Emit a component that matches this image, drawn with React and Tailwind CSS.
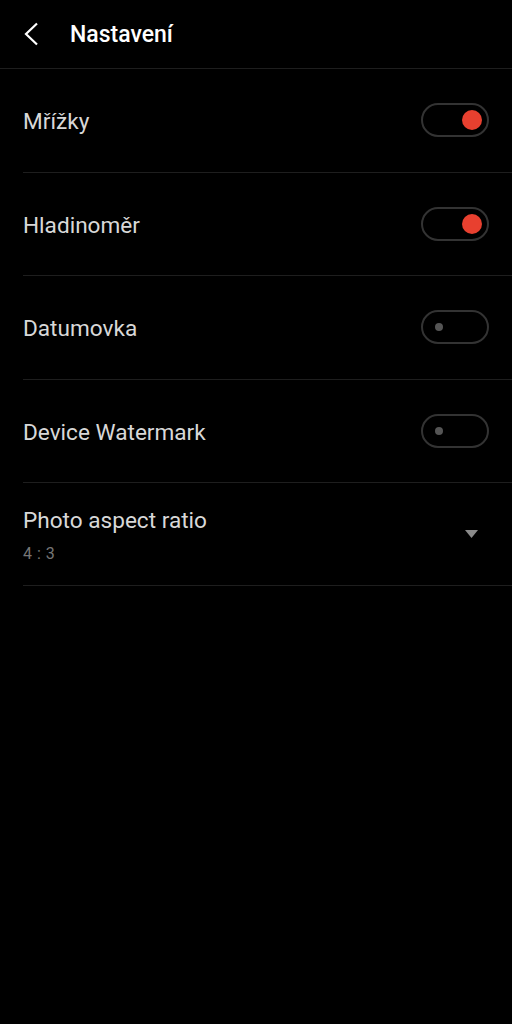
import React from "react";

function Toggle({ on }) {
  return (
    <div className="relative w-[68px] h-[34px] rounded-full border-2 border-[#333333] shrink-0">
      {on ? (
        <div className="absolute right-[5px] top-[5px] w-[20px] h-[20px] rounded-full bg-[#e8402f]" />
      ) : (
        <div className="absolute left-[12px] top-[11px] w-[8px] h-[8px] rounded-full bg-[#555555]" />
      )}
    </div>
  );
}

function Row({ label, on }) {
  return (
    <div className="h-[103.5px] border-b border-[#1e1e1e] flex items-center justify-between pr-[23px]">
      <span className="pt-[4px] text-[22.6px] text-[#d8d8d8]">{label}</span>
      <Toggle on={on} />
    </div>
  );
}

export default function App() {
  return (
    <div
      className="w-[512px] h-[1024px] bg-black overflow-hidden"
      style={{ fontFamily: "Roboto, 'Noto Sans', sans-serif" }}
    >
      <div className="h-[69px] border-b border-[#1e1e1e] flex items-center">
        <svg width="16" height="24" viewBox="0 0 16 24" className="ml-[23px] mb-[1px]">
          <path d="M14 1.5 L3 12 L14 22.5" fill="none" stroke="#ffffff" strokeWidth="2.2" />
        </svg>
        <span className="ml-[31px] pt-[3px] text-[23px] font-medium text-white">Nastavení</span>
      </div>
      <div className="pl-[23px]">
        <Row label="Mřížky" on />
        <Row label="Hladinoměr" on />
        <Row label="Datumovka" />
        <Row label="Device Watermark" />
        <div className="h-[103px] border-b border-[#1e1e1e] flex items-center justify-between pr-[34px]">
          <div className="flex flex-col pt-[3px]">
            <span className="text-[22.6px] leading-[28px] text-[#d8d8d8]">Photo aspect ratio</span>
            <span className="text-[16px] leading-[20px] mt-[9px] text-[#767676] tracking-[0.5px]">4 : 3</span>
          </div>
          <svg width="13" height="8" viewBox="0 0 13 8">
            <path d="M0 0 L13 0 L6.5 8 Z" fill="#8a8a8a" />
          </svg>
        </div>
      </div>
    </div>
  );
}
